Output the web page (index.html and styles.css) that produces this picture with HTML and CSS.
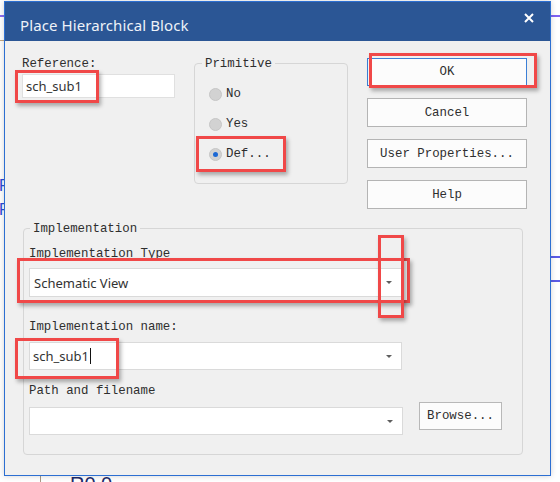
FILE: index.html
```html
<!DOCTYPE html>
<html>
<head>
<meta charset="utf-8">
<title>Place Hierarchical Block</title>
<link rel="stylesheet" href="styles.css">
</head>
<body>
  <div class="canvas-line line-purple-l"></div>
  <div class="canvas-line line-tan-l"></div>
  <div class="canvas-line line-purple-r"></div>
  <div class="canvas-line line-blue-r1"></div>
  <div class="canvas-line line-blue-r2"></div>
  <div class="canvas-line line-grey-b"></div>
  <span class="canvas-text ct-p1">P</span>
  <span class="canvas-text ct-p2">P</span>
  <span class="canvas-text ct-r">R0 0</span>

  <div class="dialog">
    <div class="titlebar">
      <span class="title">Place Hierarchical Block</span>
      <svg class="close" width="10" height="10" viewBox="0 0 10 10"><path d="M1 1 L9 9 M9 1 L1 9" stroke="#ffffff" stroke-width="2" fill="none"/></svg>
    </div>
    <div class="content">
      <div class="top-row">
        <div class="ref-col">
          <div class="label">Reference:</div>
          <div class="textbox"><span class="sans">sch_sub1</span></div>
        </div>
        <div class="group prim">
          <span class="legend">Primitive</span>
          <div class="radio-row"><span class="radio"></span><span class="rlabel">No</span></div>
          <div class="radio-row"><span class="radio"></span><span class="rlabel">Yes</span></div>
          <div class="radio-row"><span class="radio checked"></span><span class="rlabel">Def...</span></div>
        </div>
        <div class="btn-col">
          <div class="btn default">OK</div>
          <div class="btn">Cancel</div>
          <div class="btn">User Properties...</div>
          <div class="btn">Help</div>
        </div>
      </div>
      <div class="group impl">
        <span class="legend">Implementation</span>
        <div class="label l-type">Implementation Type</div>
        <div class="combo c-type"><span class="sans">Schematic View</span><span class="arrow"></span></div>
        <div class="label l-name">Implementation name:</div>
        <div class="combo c-name"><span class="sans">sch_sub1</span><span class="caret"></span><span class="arrow"></span></div>
        <div class="label l-path">Path and filename</div>
        <div class="path-row">
          <div class="combo c-path"><span class="arrow"></span></div>
          <div class="btn browse">Browse...</div>
        </div>
      </div>
    </div>
  </div>

  <div class="mark m-ref"></div>
  <div class="mark m-def"></div>
  <div class="mark m-ok"></div>
  <div class="mark m-type"></div>
  <div class="mark m-arrow"></div>
  <div class="mark m-name"></div>
</body>
</html>
```

FILE: styles.css
```css
* { box-sizing: border-box; }
html, body { margin: 0; padding: 0; }
body {
  width: 560px;
  height: 482px;
  background: #ffffff;
  position: relative;
  overflow: hidden;
  font-family: "Liberation Mono", "DejaVu Sans Mono", monospace;
  font-size: 12.4px;
  color: #2e2e2e;
}

/* background schematic bits */
.canvas-line { position: absolute; }
.line-purple-l { left: 0; top: 15px; width: 5px; height: 2px; background: #8a6cf0; }
.line-tan-l { left: 0; top: 40px; width: 5px; height: 1px; background: #c6a982; }
.line-purple-r { left: 550px; top: 15px; width: 10px; height: 2px; background: #7f62f2; }
.line-blue-r1 { left: 550px; top: 256px; width: 10px; height: 2px; background: #5c5ce6; }
.line-blue-r2 { left: 550px; top: 280px; width: 10px; height: 2px; background: #5c5ce6; }
.line-grey-b { left: 40px; top: 470px; width: 1px; height: 12px; background: #a89a86; }
.canvas-text {
  position: absolute;
  font-family: "Liberation Sans", Arial, sans-serif;
  color: #2b4cd6;
  font-size: 16px;
  line-height: 16px;
}
.ct-p1 { left: -1px; top: 178px; }
.ct-p2 { left: -1px; top: 202px; }
.ct-r { left: 70px; top: 474px; font-size: 20px; line-height: 20px; color: #1d2a6a; }

/* dialog window */
.dialog {
  position: absolute;
  left: 4px;
  top: 1px;
  width: 547px;
  height: 475px;
  border: 1px solid #2c6fd2;
  background: #f0f0f0;
  display: flex;
  flex-direction: column;
  box-shadow: 0 0 6px rgba(0, 0, 0, 0.18);
  z-index: 2;
}
.titlebar {
  height: 39px;
  background: #2b5695;
  display: flex;
  align-items: center;
  justify-content: space-between;
  padding: 7px 15px 0 15px;
  flex: none;
}
.title {
  font-family: "Noto Sans", "Open Sans", sans-serif;
  font-size: 15px;
  color: #eef2f8;
  letter-spacing: 0.1px;
}
.close { align-self: flex-start; margin-top: 4px; margin-right: 1px; }

.content { flex: 1; }
.label { line-height: 19px; height: 15px; white-space: pre; }
.rlabel { white-space: pre; }
.sans {
  font-family: "Noto Sans", "Open Sans", sans-serif;
  font-size: 13px;
  color: #333333;
}

.top-row {
  display: flex;
  align-items: flex-start;
  margin-top: 14px;
  padding-left: 17px;
}
.ref-col { width: 153px; }
.textbox {
  margin-top: 4px;
  height: 24px;
  background: #ffffff;
  border: 1px solid #e0e0e0;
  display: flex;
  align-items: center;
  padding-left: 3px;
}

.group {
  position: relative;
  border: 1px solid #d6d6d6;
  border-radius: 4px;
}
.legend {
  position: absolute;
  top: -8px;
  background: #f0f0f0;
  padding: 0 3px;
  line-height: 16px;
}
.prim {
  margin-left: 19px;
  margin-top: 8px;
  width: 154px;
  height: 121px;
  padding: 22px 0 0 14px;
  display: flex;
  flex-direction: column;
  gap: 14px;
}
.prim .legend { left: 7px; }
.radio-row { display: flex; align-items: center; height: 16px; gap: 4px; }
.radio {
  width: 13px;
  height: 13px;
  border-radius: 50%;
  background: #d2d2d2;
  border: 1px solid #c6c6c6;
  display: flex;
  align-items: center;
  justify-content: center;
}
.radio.checked::after {
  content: "";
  width: 5px;
  height: 5px;
  border-radius: 50%;
  background: #1c68d4;
}

.btn-col {
  margin-left: 19px;
  margin-top: 3px;
  width: 160px;
  display: flex;
  flex-direction: column;
  gap: 12px;
}
.btn {
  height: 29px;
  background: #fcfcfc;
  border: 1px solid #b4b4b4;
  display: flex;
  align-items: center;
  justify-content: center;
  white-space: pre;
}
.btn.default { border-color: #3b7fd6; height: 28px; }

.impl {
  margin-left: 18px;
  margin-top: 19px;
  width: 500px;
  height: 227px;
  padding: 16px 0 0 5px;
}
.impl .legend { left: 6px; }
.combo {
  width: 373px;
  height: 28px;
  background: #ffffff;
  border: 1px solid #dadada;
  display: flex;
  align-items: center;
  padding-left: 4px;
  position: relative;
}
.c-type { margin-top: 8px; height: 29px; }
.l-name { margin-top: 21px; }
.c-name { margin-top: 9px; padding-left: 3px; }
.l-path { margin-top: 12px; }
.path-row { display: flex; align-items: flex-start; margin-top: 5px; }
.c-path { margin-top: 5px; width: 374px; }
.browse { margin-left: 16px; width: 83px; height: 28px; border-color: #b8b8b8; }
.arrow {
  margin-left: auto;
  margin-right: 9px;
  width: 0;
  height: 0;
  border-left: 3px solid transparent;
  border-right: 3px solid transparent;
  border-top: 3px solid #5e5e5e;
}
.caret {
  width: 1px;
  height: 16px;
  background: #111111;
  margin-left: 1px;
}

/* annotation marks */
.mark {
  position: absolute;
  border: 3px solid #f04848;
  box-shadow: 2px 3px 4px rgba(0, 0, 0, 0.3);
  z-index: 3;
}
.m-ref { left: 15px; top: 70px; width: 84px; height: 33px; }
.m-def { left: 196px; top: 136px; width: 90px; height: 36px; }
.m-ok { left: 369px; top: 53px; width: 168px; height: 35px; }
.m-type { left: 17px; top: 258px; width: 393px; height: 45px; }
.m-arrow { left: 378px; top: 235px; width: 26px; height: 83px; }
.m-name { left: 15px; top: 338px; width: 104px; height: 41px; }
```
